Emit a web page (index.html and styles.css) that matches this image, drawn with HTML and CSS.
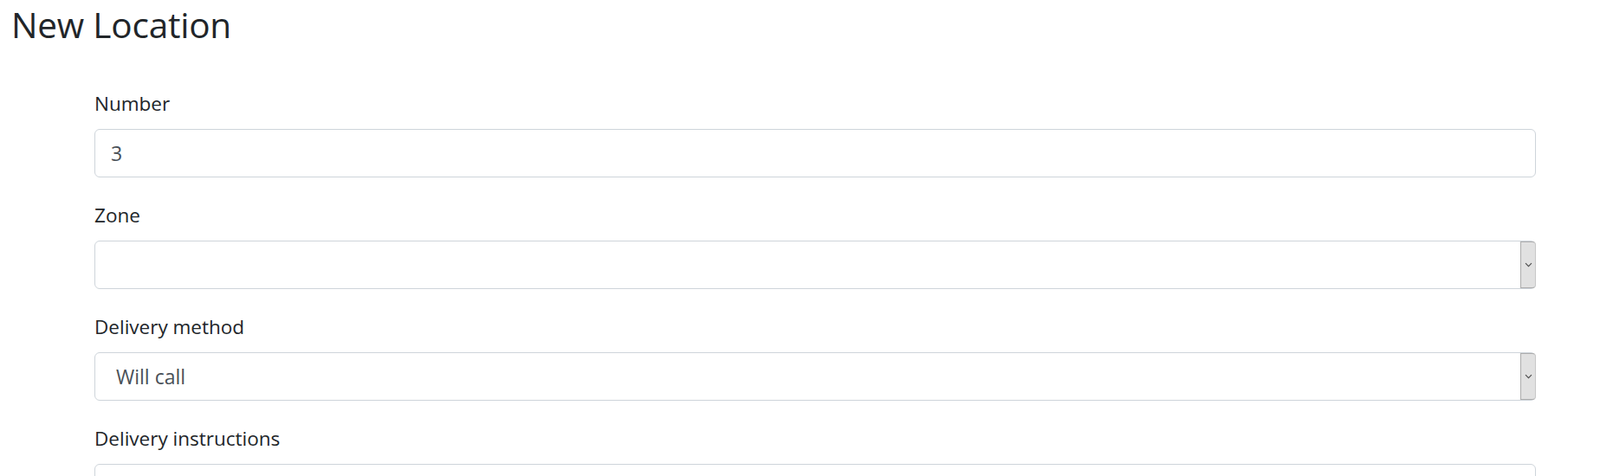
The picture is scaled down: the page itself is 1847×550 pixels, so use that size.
FILE: index.html
```html
<!DOCTYPE html>
<html>
<head>
<meta charset="utf-8">
<link rel="stylesheet" href="styles.css">
</head>
<body>
<main class="page">
  <h3 class="title">New Location</h3>
  <form class="form">
    <div class="group">
      <label class="label" for="number">Number</label>
      <input class="control" id="number" type="text" value="3">
    </div>
    <div class="group">
      <label class="label" for="zone">Zone</label>
      <div class="select-wrap">
        <select class="control select" id="zone"><option></option></select>
        <span class="arrow"><svg width="9" height="6" viewBox="0 0 9 6"><path d="M1 1.2 L4.5 4.7 L8 1.2" fill="none" stroke="#4a4a4a" stroke-width="1.1"/></svg></span>
      </div>
    </div>
    <div class="group">
      <label class="label" for="method">Delivery method</label>
      <div class="select-wrap">
        <select class="control select" id="method"><option>Will call</option></select>
        <span class="arrow"><svg width="9" height="6" viewBox="0 0 9 6"><path d="M1 1.2 L4.5 4.7 L8 1.2" fill="none" stroke="#4a4a4a" stroke-width="1.1"/></svg></span>
      </div>
    </div>
    <div class="group">
      <label class="label" for="instr">Delivery instructions</label>
      <textarea class="control area" id="instr"></textarea>
    </div>
  </form>
</main>
</body>
</html>
```

FILE: styles.css
```css
html, body {
  margin: 0;
  padding: 0;
  background: #fff;
}
body {
  font-family: "Open Sans", "Noto Sans", sans-serif;
  color: #212529;
  font-size: 22.5px;
  line-height: 1.5;
}
.page {
  padding: 4px 74px 0 13px;
}
.title {
  margin: 0;
  font-size: 40.5px;
  font-weight: 400;
  line-height: 50px;
  letter-spacing: -0.2px;
  color: #212529;
}
.form {
  margin: 47px 0 0 96px;
}
.group {
  margin-bottom: 25px;
}
.label {
  display: block;
  padding-top: 1px;
  margin-bottom: 11px;
  font-size: 22.5px;
  line-height: 36px;
}
.control {
  display: block;
  box-sizing: border-box;
  width: 100%;
  height: 56px;
  padding: 9px 18px;
  font-family: inherit;
  font-size: 23px;
  line-height: 36px;
  color: #495057;
  background: #fff;
  border: 1px solid #ced4da;
  border-radius: 6px;
  outline: none;
  margin: 0;
}
.select {
  -webkit-appearance: none;
  appearance: none;
  padding-left: 24px;
}
.select-wrap {
  position: relative;
}
.arrow {
  position: absolute;
  top: 1px;
  right: 0;
  bottom: 1px;
  width: 16px;
  display: flex;
  align-items: center;
  justify-content: center;
  background: #e1e1e1;
  border: 1px solid #adadad;
  border-right-color: #c8c8c8;
  border-radius: 0 4px 4px 0;
}
.area {
  height: 120px;
  resize: none;
}
```
